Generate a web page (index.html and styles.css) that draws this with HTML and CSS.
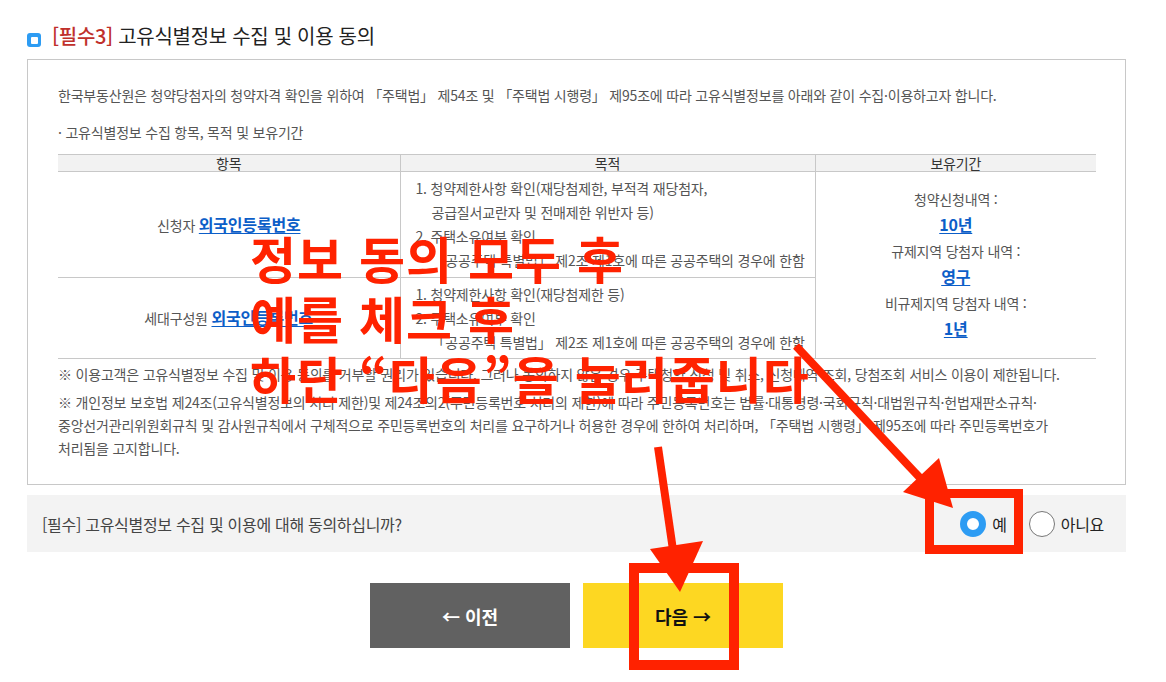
FILE: index.html
```html
<!DOCTYPE html>
<html lang="ko">
<head>
<meta charset="utf-8">
<title>고유식별정보 수집 및 이용 동의</title>
<link rel="stylesheet" href="styles.css">
</head>
<body>
<div class="page">
  <h2 class="title"><span class="bullet"><span class="bullet-in"></span></span><span class="req">[필수3]</span> 고유식별정보 수집 및 이용 동의</h2>

  <div class="box">
    <p class="intro">한국부동산원은 청약당첨자의 청약자격 확인을 위하여 「주택법」 제54조 및 「주택법 시행령」 제95조에 따라 고유식별정보를 아래와 같이 수집·이용하고자 합니다.</p>
    <p class="sub">· 고유식별정보 수집 항목, 목적 및 보유기간</p>
    <table class="info">
      <colgroup>
        <col class="c1"><col class="c2"><col class="c3">
      </colgroup>
      <thead>
        <tr><th>항목</th><th>목적</th><th>보유기간</th></tr>
      </thead>
      <tbody>
        <tr class="r1">
          <td class="item">신청자 <a class="link">외국인등록번호</a></td>
          <td class="purpose">
            <div>1. 청약제한사항 확인(재당첨제한, 부적격 재당첨자,</div>
            <div class="ind">공급질서교란자 및 전매제한 위반자 등)</div>
            <div>2. 주택소유여부 확인</div>
            <div class="ind">「공공주택 특별법」 제2조 제1호에 따른 공공주택의 경우에 한함</div>
          </td>
          <td class="keep" rowspan="2">
            <div class="lbl">청약신청내역 :</div>
            <div class="val"><a class="link">10년</a></div>
            <div class="lbl">규제지역 당첨자 내역 :</div>
            <div class="val"><a class="link">영구</a></div>
            <div class="lbl">비규제지역 당첨자 내역 :</div>
            <div class="val"><a class="link">1년</a></div>
          </td>
        </tr>
        <tr>
          <td class="item">세대구성원 <a class="link">외국인등록번호</a></td>
          <td class="purpose">
            <div>1. 청약제한사항 확인(재당첨제한 등)</div>
            <div>2. 주택소유여부 확인</div>
            <div class="ind">「공공주택 특별법」 제2조 제1호에 따른 공공주택의 경우에 한함</div>
          </td>
        </tr>
      </tbody>
    </table>
    <div class="notes">
      <p>※ 이용고객은 고유식별정보 수집 및 이용 동의를 거부할 권리가 있습니다. 그러나 동의하지 않은 경우 주택청약 신청 및 취소, 신청내역 조회, 당첨조회 서비스 이용이 제한됩니다.</p>
      <p>※ 개인정보 보호법 제24조(고유식별정보의 처리 제한)및 제24조의2(주민등록번호 처리의 제한)에 따라 주민등록번호는 법률·대통령령·국회규칙·대법원규칙·헌법재판소규칙·<br>중앙선거관리위원회규칙 및 감사원규칙에서 구체적으로 주민등록번호의 처리를 요구하거나 허용한 경우에 한하여 처리하며, 「주택법 시행령」 제95조에 따라 주민등록번호가<br>처리됨을 고지합니다.</p>
    </div>
  </div>

  <div class="question">
    <span class="q-text">[필수] 고유식별정보 수집 및 이용에 대해 동의하십니까?</span>
    <div class="radios">
      <label class="radio"><span class="dot on"></span>예</label>
      <label class="radio"><span class="dot"></span>아니요</label>
    </div>
  </div>

  <div class="buttons">
    <button class="btn prev">← 이전</button>
    <button class="btn next">다음 →</button>
  </div>

  <div class="memo">
    <div>정보 동의 모두 후</div>
    <div>예를 체크 후</div>
    <div>하단 “다음”을 눌러줍니다</div>
  </div>

  <svg class="marks" width="1166" height="682" viewBox="0 0 1166 682">
    <line x1="796" y1="346" x2="922" y2="480" stroke="#ff2200" stroke-width="8"/>
    <polygon points="903,492 939,458 953,508" fill="#ff2200"/>
    <line x1="658" y1="447" x2="673" y2="550" stroke="#ff2200" stroke-width="8"/>
    <polygon points="650,549 703,541 680,592" fill="#ff2200"/>
    <rect x="929.5" y="493.5" width="89" height="56" fill="none" stroke="#ff2200" stroke-width="9"/>
    <rect x="634" y="568" width="100" height="97" fill="none" stroke="#ff2200" stroke-width="10"/>
  </svg>
</div>
</body>
</html>
```

FILE: styles.css
```css
* { box-sizing: border-box; }
html, body { margin: 0; padding: 0; background: #fff; }
body {
  font-family: "Noto Sans CJK KR", "Noto Sans", sans-serif;
  color: #555;
  width: 1166px;
  height: 682px;
  overflow: hidden;
}
.page {
  position: relative;
  width: 1166px;
  height: 682px;
  padding: 20px 40px 0 27px;
}
.title {
  margin: 0;
  height: 39px;
  display: flex;
  align-items: flex-start;
  font-size: 20px;
  font-weight: 400;
  color: #222;
  line-height: 31px;
  white-space: pre;
  letter-spacing: -0.3px;
}
.bullet {
  width: 14px;
  height: 14px;
  margin: 13px 11px 0 0;
  border-radius: 3px;
  background: #2d9cf3;
  display: flex;
  align-items: center;
  justify-content: center;
}
.bullet-in {
  width: 7px;
  height: 7px;
  border-radius: 1px;
  background: #fff;
}
.req { color: #c0302b; font-weight: 500; }

.box {
  border: 1px solid #c8c8c8;
  padding: 25px 29px 24px 30px;
}
.intro, .sub {
  margin: 0;
  font-size: 14px;
  line-height: 20px;
  letter-spacing: -0.2px;
}
.sub { margin-top: 17px; }

.info {
  width: 100%;
  margin-top: 12px;
  border-collapse: collapse;
  font-size: 14px;
  letter-spacing: -0.2px;
}
.c1 { width: 342px; }
.c2 { width: 415px; }
.info th {
  background: #f2f2f2;
  border-top: 1px solid #c8c8c8;
  border-bottom: 1px solid #c8c8c8;
  font-weight: 400;
  color: #333;
  height: 17px;
  line-height: 15px;
  padding: 0;
}
.info th + th { border-left: 1px solid #c8c8c8; }
.info td {
  border-bottom: 1px solid #c8c8c8;
  padding: 4px 0;
  vertical-align: middle;
}
.info .r1 td.purpose { padding-bottom: 5px; }
.info td + td { border-left: 1px solid #c8c8c8; }
.item { text-align: center; line-height: 24px; }
.link {
  color: #0c5ec8;
  font-weight: 700;
  font-size: 16px;
  line-height: 1;
  text-decoration: underline;
  text-underline-offset: 2px;
}
.purpose { padding-left: 15px !important; line-height: 24px; }
.purpose .ind { padding-left: 16px; }
.keep { text-align: center; }
.keep .lbl { line-height: 24px; }
.keep .val { line-height: 28px; }

.notes { margin-top: 4px; font-size: 14px; line-height: 23px; letter-spacing: -0.2px; }
.notes p { margin: 0; }
.notes p + p { margin-top: 5px; }

.question {
  margin-top: 10px;
  height: 57px;
  background: #f3f3f3;
  display: flex;
  align-items: center;
  justify-content: space-between;
  padding: 0 22px 0 15px;
  font-size: 16px;
  letter-spacing: -0.3px;
  color: #444;
}
.q-text { padding-top: 1px; }
.radios { display: flex; gap: 22px; align-items: center; }
.radio { display: flex; align-items: center; gap: 6px; color: #222; font-size: 16px; }
.dot {
  width: 26px;
  height: 26px;
  border-radius: 50%;
  border: 1px solid #777;
  background: #fff;
}
.dot.on {
  border: 7px solid #2d9cf3;
}

.buttons {
  margin-top: 31px;
  display: flex;
  justify-content: center;
  gap: 13px;
}
.btn {
  width: 200px;
  height: 65px;
  border: 0;
  font-family: "Noto Sans CJK KR", "Noto Sans", sans-serif;
  font-size: 18px;
  font-weight: 700;
}
.prev { background: #616161; color: #fff; }
.next { background: #fdd722; color: #111; }

.memo {
  position: absolute;
  left: 250px;
  top: 227px;
  font-size: 50px;
  font-weight: 700;
  letter-spacing: 1px;
  line-height: 60px;
  color: #ff2200;
  white-space: nowrap;
  pointer-events: none;
}
.marks {
  position: absolute;
  left: 0;
  top: 0;
  pointer-events: none;
}
```
